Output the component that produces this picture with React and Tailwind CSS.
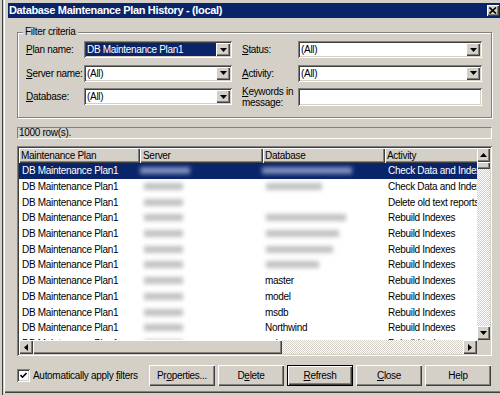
import React from 'react';

const sunken = 'shadow-[inset_1px_1px_0_#808080,inset_-1px_-1px_0_#ffffff,inset_2px_2px_0_#404040,inset_-2px_-2px_0_#d4d0c8]';
const raised = 'shadow-[inset_1px_1px_0_#ffffff,inset_-1px_-1px_0_#404040,inset_-2px_-2px_0_#808080]';
const dither = 'bg-[image:repeating-conic-gradient(#ffffff_0%_25%,#d4d0c8_0%_50%)] bg-[length:2px_2px]';

const rows = [
  { sel: true, dbBlur: 90, act: 'Check Data and Indexes' },
  { dbBlur: 56, act: 'Check Data and Indexes' },
  { act: 'Delete old text reports' },
  { dbBlur: 80, act: 'Rebuild Indexes' },
  { dbBlur: 73, act: 'Rebuild Indexes' },
  { dbBlur: 67, act: 'Rebuild Indexes' },
  { dbBlur: 53, act: 'Rebuild Indexes' },
  { db: 'master', act: 'Rebuild Indexes' },
  { db: 'model', act: 'Rebuild Indexes' },
  { db: 'msdb', act: 'Rebuild Indexes' },
  { db: 'Northwind', act: 'Rebuild Indexes' },
  { db: 'pubs', act: 'Rebuild Indexes' },
];

const Arrow = ({ dir }) => {
  const vertical = dir === 'up' || dir === 'down';
  const pts = {
    down: '0,0 7,0 3.5,4',
    up: '0,4 7,4 3.5,0',
    left: '4,0 4,7 0,3.5',
    right: '0,0 0,7 4,3.5',
  }[dir];
  return (
    <svg width={vertical ? 7 : 4} height={vertical ? 4 : 7} viewBox={vertical ? '0 0 7 4' : '0 0 4 7'}>
      <polygon points={pts} fill="#000" />
    </svg>
  );
};

const ScrollBtn = ({ dir, className = '' }) => (
  <div className={`flex-none bg-[#d4d0c8] ${raised} flex items-center justify-center ${className}`}>
    <Arrow dir={dir} />
  </div>
);

const Combo = ({ value, selected, width }) => (
  <div className={`h-[17px] ${width} bg-white ${sunken} p-[2px] flex`}>
    <div className={`flex-1 flex items-center pl-[1px] whitespace-nowrap ${selected ? 'bg-[#0a246a] text-white' : ''}`}>
      {value}
    </div>
    <ScrollBtn dir="down" className="w-[14px] h-full" />
  </div>
);

const Field = ({ label, children, labelW }) => (
  <div className="flex items-center h-[17px]">
    <div className={`${labelW} leading-[11px]`}>{label}</div>
    {children}
  </div>
);

const Button = ({ children, def }) => (
  <div className={`w-[66px] h-[21px] ${def ? 'border border-black' : ''} bg-[#d4d0c8]`}>
    <div className={`w-full h-full ${raised} flex items-center justify-center`}>{children}</div>
  </div>
);

const Blob = ({ w, sel, ml = 'ml-[2px]' }) => (
  <div className={`${ml} h-[7px] blur-[2px] ${sel ? 'bg-[#7f8fbc]' : 'bg-[#c2c2c2]'}`} style={{ width: w }} />
);

export default function App() {
  return (
    <div className="w-[500px] h-[395px] overflow-hidden bg-[#d4d0c8] flex font-['Liberation_Sans',Arial,sans-serif] text-[10px] tracking-[-0.3px] text-black">
      <div className="w-[3px] flex-none border-r border-[#404040]" />
      <div className="w-[502px] flex-none h-[393px] pl-[5px] shadow-[inset_1px_0_0_#d4d0c8,inset_2px_0_0_#ffffff,inset_0_-1px_0_#404040,inset_0_-2px_0_#808080]">
        {/* title bar */}
        <div className="mt-[3px] h-[15px] w-[493px] bg-[#0a246a] flex items-center justify-between pl-[1px] pr-[2px]">
          <span className="text-white font-bold text-[11px] tracking-[-0.35px] whitespace-nowrap">
            Database Maintenance Plan History - (local)
          </span>
          <div className={`w-[12px] h-[11px] bg-[#d4d0c8] ${raised} flex items-center justify-center`}>
            <svg width="8" height="7" viewBox="0 0 8 7">
              <path d="M0.5 0.5 L7 6.5 M7 0.5 L0.5 6.5" stroke="#000" strokeWidth="1.6" />
            </svg>
          </div>
        </div>

        <div className="ml-[9px] w-[475px]">
          {/* filter criteria */}
          <fieldset className="mt-[8px] border border-[#808080] shadow-[inset_1px_1px_0_#ffffff,1px_1px_0_#ffffff] pl-[8px] pr-[9px] pt-[3px] pb-[12px]">
            <legend className="ml-[-3px] px-[2px] leading-[12px] bg-[#d4d0c8]">Filter criteria</legend>
            <div className="flex flex-col gap-[6.5px]">
              <div className="flex">
                <Field label={<><u>P</u>lan name:</>} labelW="w-[58px]">
                  <Combo value="DB Maintenance Plan1" selected width="w-[148px]" />
                </Field>
                <div className="w-[10px]" />
                <Field label={<><u>S</u>tatus:</>} labelW="w-[56px]">
                  <Combo value="(All)" width="w-[184px]" />
                </Field>
              </div>
              <div className="flex">
                <Field label={<><u>S</u>erver name:</>} labelW="w-[58px]">
                  <Combo value="(All)" width="w-[148px]" />
                </Field>
                <div className="w-[10px]" />
                <Field label={<><u>A</u>ctivity:</>} labelW="w-[56px]">
                  <Combo value="(All)" width="w-[184px]" />
                </Field>
              </div>
              <div className="flex">
                <Field label={<><u>D</u>atabase:</>} labelW="w-[58px]">
                  <Combo value="(All)" width="w-[148px]" />
                </Field>
                <div className="w-[10px]" />
                <Field label={<><u>K</u>eywords in<br />message:</>} labelW="w-[56px]">
                  <div className={`h-[18px] w-[184px] bg-white ${sunken}`} />
                </Field>
              </div>
            </div>
          </fieldset>

          {/* status strip */}
          <div className="mt-[9px] h-[12px] border border-[#808080] border-r-white border-b-white flex items-center pl-[1px] leading-[10px]">
            1000 row(s).
          </div>

          {/* grid */}
          <div className={`mt-[7px] h-[210px] bg-white ${sunken} p-[2px] flex flex-col`}>
            <div className="flex flex-1 min-h-0">
              <div className="w-[458px] overflow-hidden flex flex-col">
                <div className="flex h-[15px] flex-none bg-[#d4d0c8]">
                  <div className={`w-[121px] flex-none ${raised} flex items-center pl-[2px]`}>Maintenance Plan</div>
                  <div className={`w-[123px] flex-none ${raised} flex items-center pl-[3px]`}>Server</div>
                  <div className={`w-[122px] flex-none ${raised} flex items-center pl-[2px]`}>Database</div>
                  <div className={`w-[122px] flex-none ${raised} flex items-center pl-[2px]`}>Activity</div>
                </div>
                {rows.map((r, i) => (
                  <div key={i} className={`flex h-[15.7px] flex-none items-center whitespace-nowrap ${r.sel ? 'bg-[#0a246a] text-white' : ''}`}>
                    <div className="w-[121px] flex-none pl-[3px]">DB Maintenance Plan1</div>
                    <div className="w-[123px] flex-none flex items-center">
                      <Blob w={r.sel ? 50 : 39} sel={r.sel} ml={r.sel ? 'ml-[0px]' : 'ml-[4px]'} />
                    </div>
                    <div className="w-[122px] flex-none flex items-center pl-[2px] overflow-visible">
                      {r.dbBlur ? <Blob w={r.dbBlur} sel={r.sel} ml={r.sel ? 'ml-[-3px]' : 'ml-[1px]'} /> : r.db}
                    </div>
                    <div className="w-[122px] flex-none pl-[3px] overflow-hidden">{r.act}</div>
                  </div>
                ))}
              </div>
              {/* vertical scrollbar */}
              <div className={`w-[13px] flex-none flex flex-col ${dither}`}>
                <ScrollBtn dir="up" className="h-[14px]" />
                <div className={`h-[7px] flex-none bg-[#d4d0c8] ${raised}`} />
                <div className="flex-1" />
                <ScrollBtn dir="down" className="h-[14px]" />
              </div>
            </div>
            {/* horizontal scrollbar */}
            <div className="flex h-[14px] flex-none">
              <ScrollBtn dir="left" className="w-[14px] h-full" />
              <div className={`w-[249px] flex-none bg-[#d4d0c8] ${raised}`} />
              <div className={`flex-1 ${dither}`} />
              <ScrollBtn dir="right" className="w-[14px] h-full" />
              <div className="w-[13px] flex-none bg-[#d4d0c8]" />
            </div>
          </div>

          {/* bottom bar */}
          <div className="mt-[9px] flex items-center h-[21px]">
            <div className={`w-[13px] h-[13px] bg-white ${sunken} flex items-center justify-center`}>
              <svg width="7" height="7" viewBox="0 0 7 7">
                <path d="M0.5 3 L2.5 5.2 L6.5 1" stroke="#000" strokeWidth="1.6" fill="none" />
              </svg>
            </div>
            <span className="ml-[3px] whitespace-nowrap">Automatically apply <u>f</u>ilters</span>
            <div className="ml-auto flex gap-[3px] mr-[1px]">
              <Button>Pr<u>o</u>perties...</Button>
              <Button>D<u>e</u>lete</Button>
              <Button def><u>R</u>efresh</Button>
              <Button><u>C</u>lose</Button>
              <Button>Help</Button>
            </div>
          </div>
        </div>
      </div>
    </div>
  );
}
